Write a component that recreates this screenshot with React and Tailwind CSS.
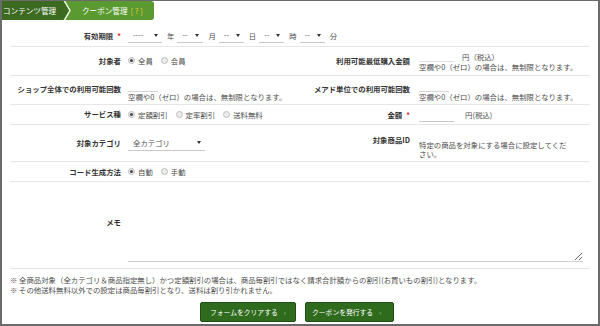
import React from "react";

const Radio = ({ checked, label }) => (
  <span className="flex items-center mr-[8px]">
    <span className="w-[7px] h-[7px] rounded-full border border-[#bdbdbd] bg-[#ececec] flex items-center justify-center">
      {checked && <span className="w-[3px] h-[3px] rounded-full bg-[#444]" />}
    </span>
    <span className="ml-[3px]">{label}</span>
  </span>
);

const Caret = () => (
  <span className="w-0 h-0 border-l-[2px] border-r-[2px] border-t-[3px] border-l-transparent border-r-transparent border-t-[#333]" />
);

const Select = ({ w, value }) => (
  <div className={`${w} h-[15px] border-b border-[#c9c9c9] flex items-center justify-between pl-[5px] pr-[4px] text-[#555]`}>
    <span>{value}</span>
    <Caret />
  </div>
);

const Label = ({ children, w = "w-[111px]", extra = "" }) => (
  <div className={`${w} shrink-0 text-right font-bold text-[#333] leading-[10px] ${extra}`}>{children}</div>
);

const Req = () => <span className="text-[#e0302a] ml-[4px]">*</span>;

export default function App() {
  return (
    <div className="w-[600px] h-[326px] bg-white border-x-2 border-b-2 border-t border-[#6b6b6b] font-['Noto_Sans_CJK_JP',sans-serif] text-[7.4px] text-[#4d4d4d] overflow-hidden">
      {/* breadcrumb */}
      <div className="flex h-[19px] text-[7.6px] text-white">
        <div className="w-[60px] bg-[#3b6a20] flex items-center pl-[1px]">コンテンツ管理</div>
        <svg width="12" height="19" viewBox="0 0 12 19" className="block">
          <rect width="12" height="19" fill="#5b9a30" />
          <polygon points="0,0 1,0 7,9.5 1,19 0,19" fill="#3b6a20" />
          <polyline points="2,-1 8,9.5 2,20" fill="none" stroke="#ffffff" strokeWidth="1.3" />
        </svg>
        <div className="w-[80px] bg-[#5b9a30] rounded-r-[3px] flex items-center pl-[8px]">
          クーポン管理<span className="text-[#e6c33a] ml-[3px]">[ ? ]</span>
        </div>
      </div>

      <div className="px-[8px]">
        {/* 有効期限 */}
        <div className="h-[27px] pt-[5px] border-b border-[#e6e6e6] flex items-center">
          <Label>
            有効期限<Req />
          </Label>
          <div className="ml-[7px] flex items-center">
            <Select w="w-[34px]" value="----" />
            <span className="ml-[5px] mr-[3px]">年</span>
            <Select w="w-[26px]" value="--" />
            <span className="ml-[5px] mr-[3px]">月</span>
            <Select w="w-[25px]" value="--" />
            <span className="ml-[5px] mr-[3px]">日</span>
            <Select w="w-[25px]" value="--" />
            <span className="ml-[5px] mr-[3px]">時</span>
            <Select w="w-[25px]" value="--" />
            <span className="ml-[5px]">分</span>
          </div>
        </div>

        {/* 対象者 / 最低購入金額 */}
        <div className="h-[29px] border-b border-[#e6e6e6] flex items-center">
          <div className="w-[290px] flex items-center">
            <Label>対象者</Label>
            <div className="ml-[7px] flex items-center">
              <Radio checked label="全員" />
              <Radio label="会員" />
            </div>
          </div>
          <div className="flex items-center">
            <Label w="w-[110px]">利用可能最低購入金額</Label>
            <div className="ml-[9px] leading-[10px]">
              <div className="flex items-end h-[11px]">
                <span className="w-[35px] h-[8px] border-b border-[#e0e0e0]" />
                <span className="ml-[8px]">円（税込）</span>
              </div>
              <div>空欄や0（ゼロ）の場合は、無制限となります。</div>
            </div>
          </div>
        </div>

        {/* 利用可能回数 */}
        <div className="h-[29px] border-b border-[#e6e6e6] flex items-start">
          <div className="w-[290px] flex items-start">
            <Label extra="mt-[8px]">ショップ全体での利用可能回数</Label>
            <div className="ml-[7px] mt-[8px] leading-[10px]">
              <div className="w-[30px] h-[8px] border-b border-[#d6d6d6]" />
              <div>空欄や0（ゼロ）の場合は、無制限となります。</div>
            </div>
          </div>
          <div className="flex items-start">
            <Label w="w-[110px]" extra="mt-[8px]">メアド単位での利用可能回数</Label>
            <div className="ml-[9px] mt-[8px] leading-[10px]">
              <div className="w-[30px] h-[8px] border-b border-[#d6d6d6]" />
              <div>空欄や0（ゼロ）の場合は、無制限となります。</div>
            </div>
          </div>
        </div>

        {/* サービス種 / 金額 */}
        <div className="h-[20px] border-b border-[#e6e6e6] flex items-center">
          <div className="w-[290px] flex items-center">
            <Label>サービス種</Label>
            <div className="ml-[7px] flex items-center">
              <Radio checked label="定額割引" />
              <Radio label="定率割引" />
              <Radio label="送料無料" />
            </div>
          </div>
          <div className="flex items-center">
            <Label w="w-[110px]">
              金額<Req />
            </Label>
            <div className="ml-[9px] flex items-center">
              <span className="w-[35px] h-[14px] border-b border-[#c9c9c9]" />
              <span className="ml-[11px]">円(税込)</span>
            </div>
          </div>
        </div>

        {/* 対象カテゴリ / 対象商品ID */}
        <div className="h-[37px] border-b border-[#e6e6e6] flex items-start">
          <div className="w-[290px] h-full flex items-center">
            <Label>対象カテゴリ</Label>
            <div className="ml-[7px]">
              <Select w="w-[77px]" value="全カテゴリ" />
            </div>
          </div>
          <div className="flex items-start">
            <Label w="w-[110px]" extra="mt-[10px]">対象商品ID</Label>
            <div className="ml-[9px] mt-[16px] w-[152px] leading-[8.5px]">
              特定の商品を対象にする場合に設定してください。
            </div>
          </div>
        </div>

        {/* コード生成方法 */}
        <div className="h-[20px] border-b border-[#e6e6e6] flex items-center">
          <Label>コード生成方法</Label>
          <div className="ml-[7px] flex items-center">
            <Radio checked label="自動" />
            <Radio label="手動" />
          </div>
        </div>

        {/* メモ */}
        <div className="h-[87px] border-b border-[#e6e6e6] flex items-start">
          <Label extra="mt-[35px]">メモ</Label>
          <textarea
            className="ml-[7px] mt-[3px] w-[455px] h-[77px] border-0 border-b border-[#cfcfcf] outline-none bg-white"
            defaultValue=""
          />
        </div>

        {/* notes */}
        <div className="mt-[6px] leading-[10px]">
          <div>※ 全商品対象（全カテゴリ＆商品指定無し）かつ定額割引の場合は、商品毎割引ではなく請求合計額からの割引(お買いもの割引)となります。</div>
          <div>※ その他送料無料以外での設定は商品毎割引となり、送料は割り引かれません。</div>
        </div>

        {/* buttons */}
        <div className="mt-[7px] flex justify-center gap-[9px] pr-[6px] text-[6.8px] text-white">
          <button className="w-[96px] h-[20px] bg-[#2f6b1d] border border-[#1f4f12] rounded-[2px] flex items-center pl-[9px]">
            フォームをクリアする<span className="ml-[6px] text-[#b5cfa8]">›</span>
          </button>
          <button className="w-[89px] h-[20px] bg-[#2f6b1d] border border-[#1f4f12] rounded-[2px] flex items-center pl-[6px]">
            クーポンを発行する<span className="ml-[6px] text-[#b5cfa8]">›</span>
          </button>
        </div>
      </div>
    </div>
  );
}
